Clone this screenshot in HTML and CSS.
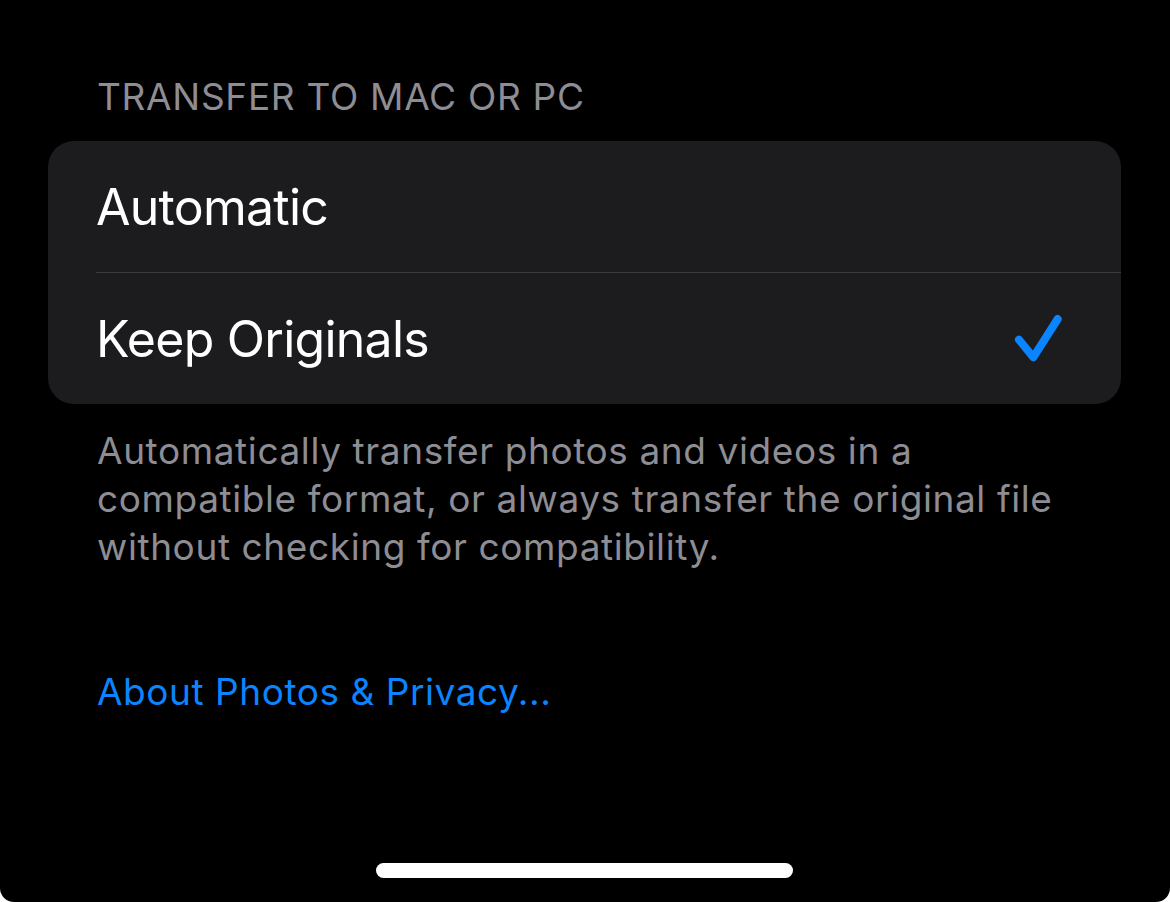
FILE: index.html
```html
<!DOCTYPE html>
<html lang="en">
<head>
<meta charset="utf-8">
<title>Transfer to Mac or PC</title>
<link rel="stylesheet" href="styles.css">
</head>
<body>
<div class="screen">
  <div class="section-header">TRANSFER TO MAC OR PC</div>
  <div class="group">
    <div class="row">
      <span class="row-label">Automatic</span>
    </div>
    <div class="row row-sep">
      <span class="row-label">Keep Originals</span>
      <svg class="check" viewBox="0 0 50 50" width="50" height="50" aria-hidden="true">
        <path d="M5 25.7 L19.3 43.3 L43.7 5" fill="none" stroke="#0a84ff" stroke-width="8" stroke-linecap="round" stroke-linejoin="round"/>
      </svg>
    </div>
  </div>
  <p class="section-footer">Automatically transfer photos and videos in a compatible format, or always transfer the original file without checking for compatibility.</p>
  <a class="link" href="#">About Photos &amp; Privacy...</a>
  <div class="home-indicator"></div>
</div>
</body>
</html>
```
FILE: styles.css
```css
html, body {
  margin: 0;
  padding: 0;
  background: #ffffff;
}
.screen {
  width: 1170px;
  height: 902px;
  box-sizing: border-box;
  background: #000000;
  border-radius: 0 0 14px 14px;
  padding: 77px 49px 24px 48px;
  display: flex;
  flex-direction: column;
  font-family: Inter, "Noto Sans", sans-serif;
  overflow: hidden;
}
.section-header {
  color: #8d8d93;
  font-size: 37px;
  line-height: 40px;
  padding-left: 49px;
  margin-bottom: 24px;
  letter-spacing: 0.7px;
}
.group {
  background: #1c1c1e;
  border-radius: 26px;
  display: flex;
  flex-direction: column;
}
.row {
  height: 132px;
  box-sizing: border-box;
  margin-left: 48px;
  padding-right: 57px;
  display: flex;
  align-items: center;
  justify-content: space-between;
}
.row:first-child {
  height: 131px;
}
.row-sep {
  border-top: 1px solid #3a3a3c;
}
.row-label {
  color: #ffffff;
  font-size: 50px;
  line-height: 1;
  letter-spacing: -0.75px;
}
.check {
  display: block;
  flex: none;
}
.section-footer {
  margin: 23px 0 0 0;
  padding-left: 49px;
  padding-right: 40px;
  color: #8d8d93;
  font-size: 37px;
  line-height: 48px;
  letter-spacing: 0.6px;
}
.link {
  margin-top: 97px;
  padding-left: 49px;
  color: #0a84ff;
  font-size: 37px;
  line-height: 48px;
  letter-spacing: 0.55px;
  text-decoration: none;
  align-self: flex-start;
}
.home-indicator {
  margin-top: auto;
  align-self: center;
  width: 417px;
  height: 15px;
  border-radius: 8px;
  background: #ffffff;
}
```
